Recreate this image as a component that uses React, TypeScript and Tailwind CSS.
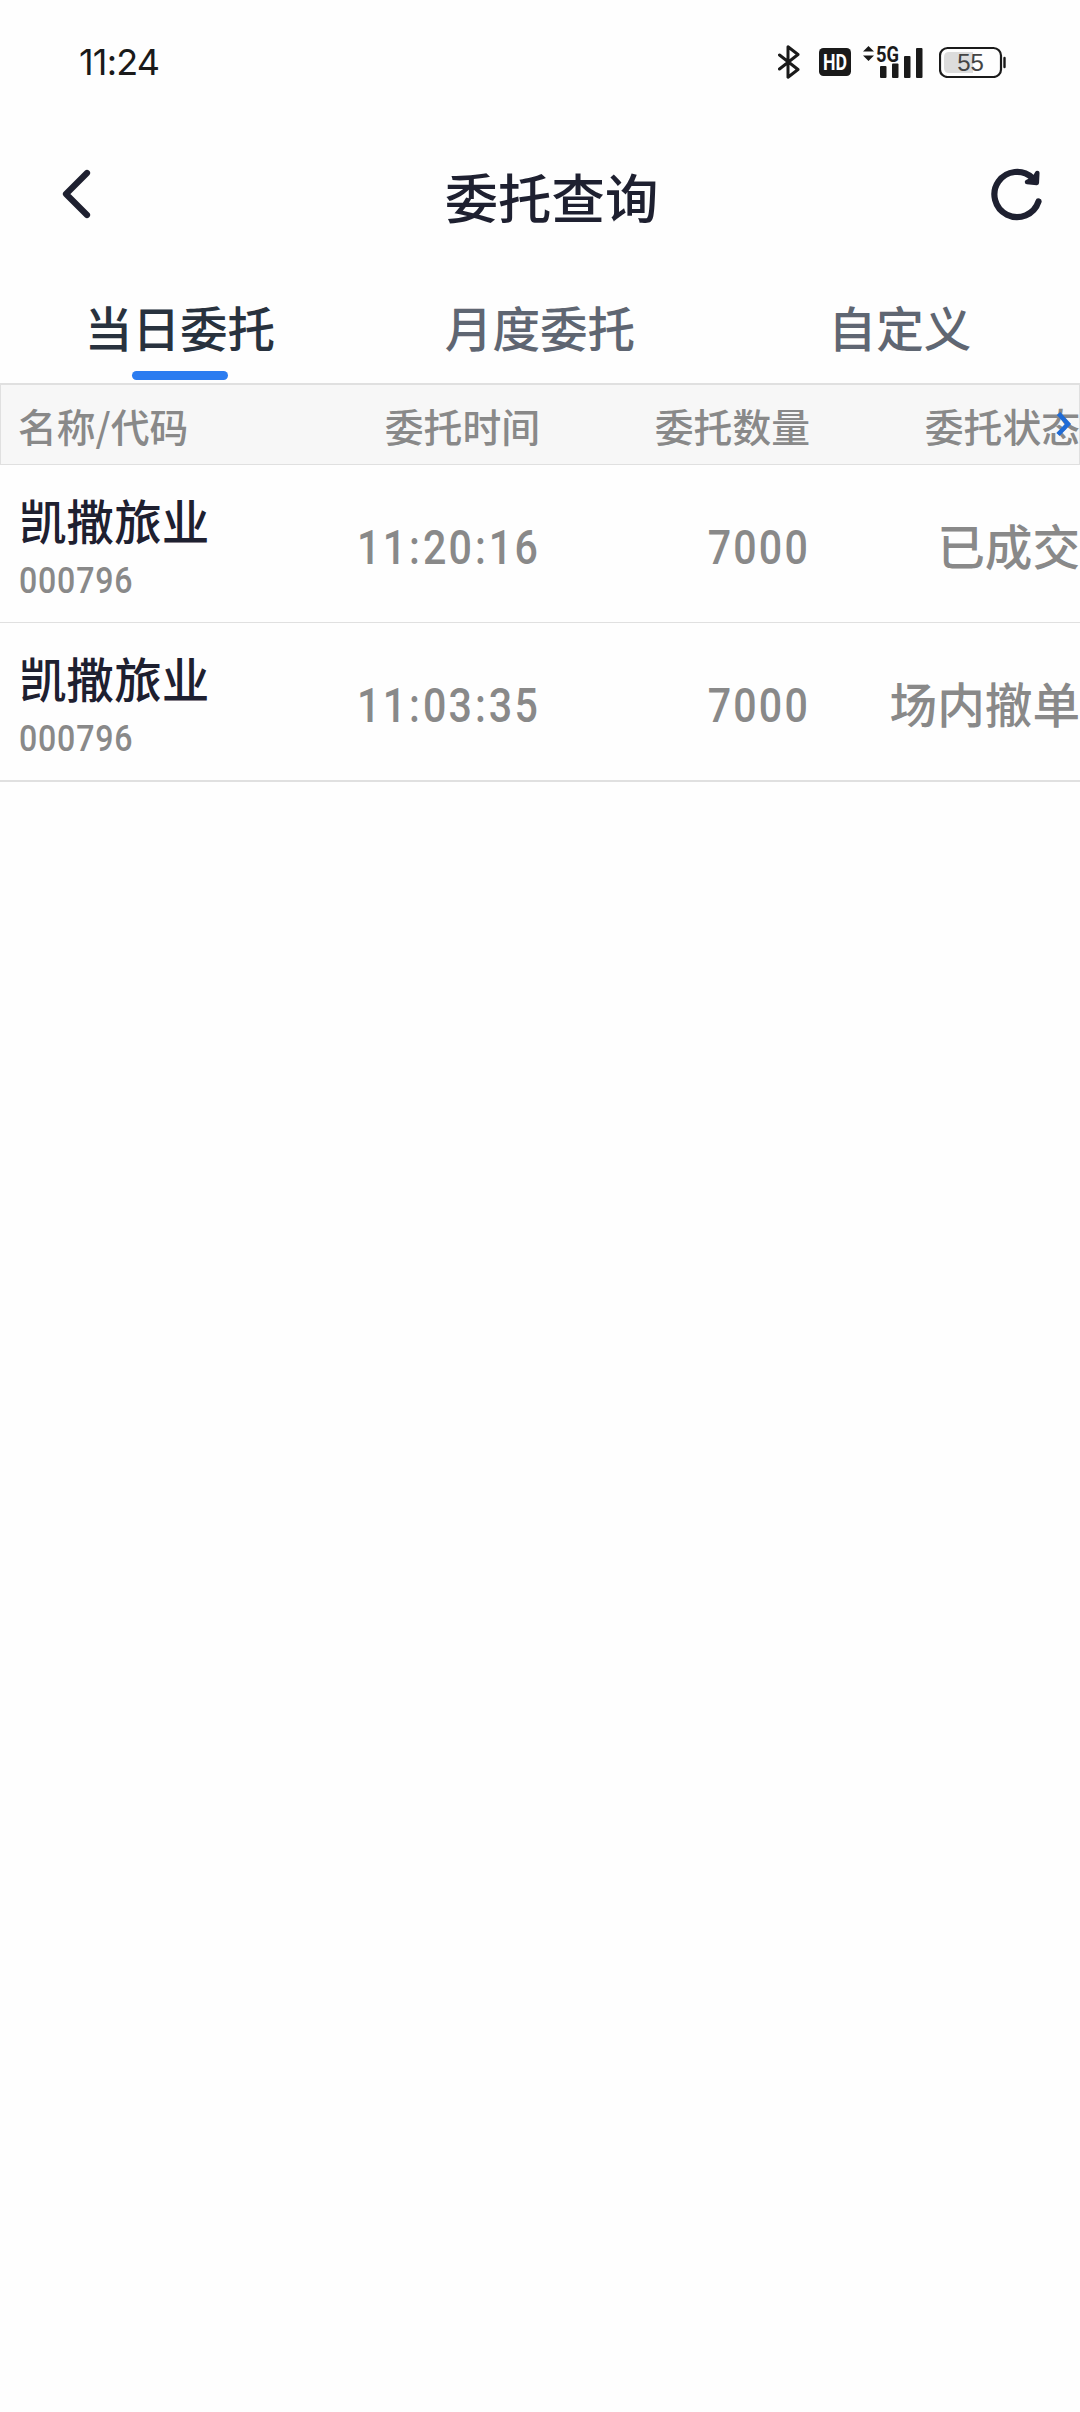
import { useState } from 'react';

interface Order {
  id: number;
  name: string;
  code: string;
  time: string;
  amount: string;
  status: string;
}

const orders: Order[] = [
  { id: 1, name: '凯撒旅业', code: '000796', time: '11:20:16', amount: '7000', status: '已成交' },
  { id: 2, name: '凯撒旅业', code: '000796', time: '11:03:35', amount: '7000', status: '场内撤单' },
];

const tabs = ['当日委托', '月度委托', '自定义'];

function StatusBar() {
  return (
    <div className="flex h-[124px] items-center justify-between pl-[79px] pr-[74px]">
      <span className="font-['Inter'] text-[36px] leading-none tracking-[-0.8px] text-[#1a1a1a]">11:24</span>
      <div className="flex items-center text-[#1a1a1a]">
        {/* Bluetooth */}
        <svg className="mr-[19px]" width="22" height="34" viewBox="0 0 22 34" fill="none" stroke="currentColor" strokeWidth="3" strokeLinejoin="round" strokeLinecap="round">
          <path d="M1.5 10L20 24.5L10 32.2V1.8L20 9.5L1.5 24" />
        </svg>
        {/* HD */}
        <svg className="mr-[12px] overflow-visible" width="32" height="28" viewBox="0 0 32 28">
          <rect width="32" height="28" rx="4.5" fill="currentColor" />
          <text x="16" y="21.8" textAnchor="middle" textLength="24" lengthAdjust="spacingAndGlyphs" fill="#fff" className="font-['Roboto'] text-[22.5px] font-bold">HD</text>
        </svg>
        {/* 5G signal */}
        <svg className="mr-[16px] overflow-visible" width="60" height="34" viewBox="0 0 60 34" fill="currentColor">
          <path d="M0 6.5L5.5 1L11 6.5ZM0 10.5L5.5 16L11 10.5Z" />
          <text x="13" y="16.6" textLength="23" lengthAdjust="spacingAndGlyphs" className="font-['Roboto'] text-[22px] font-bold">5G</text>
          <rect x="17" y="21" width="6.5" height="12" rx="1" />
          <rect x="29" y="18.5" width="6.5" height="14.5" rx="1" />
          <rect x="41" y="11" width="6.5" height="22" rx="1" />
          <rect x="53" y="3" width="6.5" height="30" rx="1" />
        </svg>
        {/* Battery */}
        <svg width="67" height="32" viewBox="0 0 67 32" fill="none">
          <rect x="1" y="2" width="61" height="29" rx="7.5" stroke="currentColor" strokeWidth="2.2" />
          <path d="M10 6H34V27H10Q5 27 5 22V11Q5 6 10 6Z" fill="#dcdcdc" />
          <path d="M65.5 12V21" stroke="currentColor" strokeWidth="2.4" strokeLinecap="round" />
          <text x="31.5" y="25" textAnchor="middle" fill="#444" className="font-['Liberation_Sans'] text-[24px]">55</text>
        </svg>
      </div>
    </div>
  );
}

function NavBar() {
  return (
    <div className="flex h-[140px] items-center justify-between pl-[60px] pr-[36px] text-[#1e2030]">
      <button type="button" aria-label="返回">
        <svg width="34" height="52" viewBox="0 0 34 52" fill="none" stroke="currentColor" strokeWidth="6.2" strokeLinecap="round" strokeLinejoin="round">
          <path d="M27 5L6 26L27 47" />
        </svg>
      </button>
      <h1 className="pt-1 pl-[19px] text-[53.4px] font-medium leading-none">委托查询</h1>
      <button type="button" aria-label="刷新">
        <svg width="54" height="54" viewBox="0 0 54 54" fill="none" stroke="currentColor" strokeWidth="6.2" strokeLinecap="round" strokeLinejoin="round">
          <path d="M48.5 34.5A22.6 22.6 0 1 1 42.5 11" />
          <path d="M47.3 6L46.8 16L37 15L44 11.5Z" fill="currentColor" strokeWidth="4.5" />
        </svg>
      </button>
    </div>
  );
}

// Colons get slightly more room than the tracked digits
function TimeText({ value }: { value: string }) {
  return (
    <>
      {value.split(':').map((part, i) => (
        <span key={i}>
          {i > 0 && <span className="mx-[1px]">:</span>}
          {part}
        </span>
      ))}
    </>
  );
}

export default function App() {
  const [active, setActive] = useState(0);

  return (
    <div className="min-h-[2412px] w-[1080px] overflow-hidden bg-[#fefefe] font-['Noto_Sans_CJK_SC',sans-serif]">
      <StatusBar />
      <NavBar />

      {/* Tabs */}
      <div className="grid h-[119px] grid-cols-3">
        {tabs.map((tab, i) => (
          <button
            key={tab}
            type="button"
            onClick={() => setActive(i)}
            className={`flex flex-col items-center pt-[39px] text-[47.6px] font-medium leading-[48px] ${i === active ? 'text-[#28323e]' : 'text-[#5f6672]'}`}
          >
            {tab}
            {i === active && <span className="mt-[20px] h-[9px] w-24 rounded-full bg-[#2b7cf0]" />}
          </button>
        ))}
      </div>

      {/* Table header */}
      <div className="relative grid h-[82px] grid-cols-[269px_270px_270px_270px] items-center border border-t-2 border-[#e0e0e0] bg-[#f7f7f7] pt-[2px] text-right text-[38.8px] font-medium leading-none text-[#898989]">
        <span className="pl-[17px] text-left">名称/代码</span>
        <span>委托时间</span>
        <span>委托数量</span>
        <span>委托状态</span>
        <svg className="absolute right-[7px] top-[26px]" width="16" height="26" viewBox="0 0 16 26" fill="none" stroke="#1f6bd6" strokeWidth="4.6">
          <path d="M2.5 2.5L12 13L2 23.5" />
        </svg>
      </div>

      {/* Rows */}
      <div className="border-b border-[#e0e0e0]">
        {orders.map(order => (
          <div
            key={order.id}
            className="grid h-[158px] grid-cols-[270px_270px_270px_270px] items-center border-b border-[#e0e0e0] text-right text-[#898989]"
          >
            <div className="pt-[8px] pl-[19px] text-left">
              <p className="text-[47.6px] font-medium leading-[54px] text-[#1e2030]">{order.name}</p>
              <p className="mt-[12px] origin-left scale-x-[0.88] font-['Roboto'] text-[36.5px] font-medium leading-[44px] tracking-[0.9px]">{order.code}</p>
            </div>
            <span className="origin-right scale-x-[0.84] pt-[7px] font-['Roboto'] text-[49px] font-medium leading-none tracking-[2.6px]">
              <TimeText value={order.time} />
            </span>
            <span className="origin-right scale-x-[0.84] pt-[7px] font-['Roboto'] text-[49px] font-medium leading-none tracking-[2.6px]">
              {order.amount}
            </span>
            <span className="whitespace-nowrap pt-[3px] text-[47.6px] font-medium leading-none">{order.status}</span>
          </div>
        ))}
      </div>
    </div>
  );
}
